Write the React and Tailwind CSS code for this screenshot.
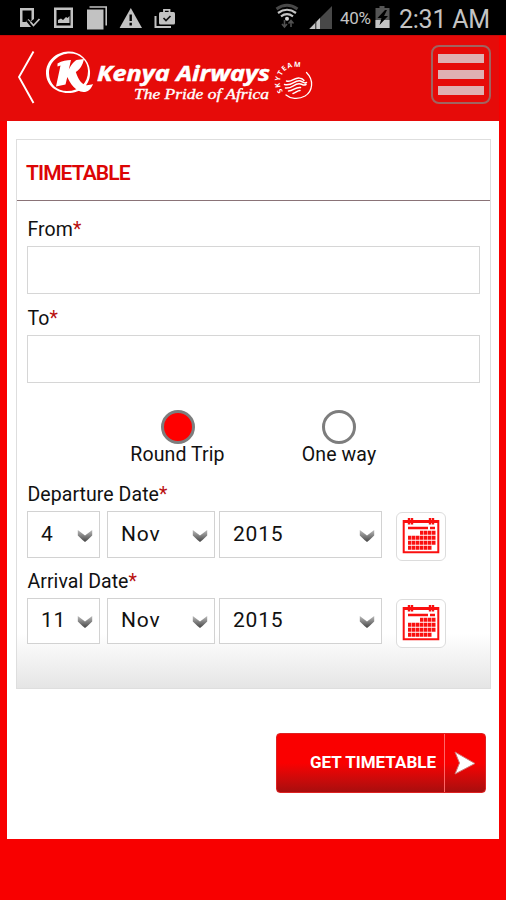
import { useState } from "react";

function StatusBar() {
  return (
    <div className="flex h-[35px] items-center bg-black">
      <svg width="180" height="35" fill="#c2c2c2">
        <path fillRule="evenodd" d="M20 8h14v11l-4 3-2-2-2 1 5 6H20zM22.500 10.500v11.500h3l3-3 2 2 1-1v-9.500z" />
        <path d="M30.500 22l3 3.500 6-6.500" fill="none" stroke="#c2c2c2" strokeWidth="1.800" />
        <path fillRule="evenodd" d="M54 7.500h19v20.500h-19zM56.500 10v15.500h14v-15.500z" />
        <path d="M58 23v-3l3-1.500 2 1.500 3-3 1.500 1 2-2v7z" />
        <path d="M87 9.500h16.500v20h-16.500z" />
        <path d="M89.500 7h16.700v18.500" fill="none" stroke="#c2c2c2" strokeWidth="1.600" />
        <path d="M130.800 8l11.200 20h-22.400z" />
        <path d="M130.700 14.500v6.500M130.700 22.800v2.800" stroke="#000" strokeWidth="2.400" />
        <rect x="159" y="12" width="16" height="12.500" rx="1.500" />
        <path d="M164 12v-2.200h5.500v2.200" fill="none" stroke="#c2c2c2" strokeWidth="1.800" />
        <path d="M155.500 16v11h15.500" fill="none" stroke="#c2c2c2" strokeWidth="2" />
        <path d="M163.500 18l2.500 2.500 4.500-4.500" fill="none" stroke="#111" strokeWidth="1.700" />
      </svg>
      <svg className="ml-[94px]" width="61" height="35" fill="none">
        <path d="M2.500 9Q13 1.500 23.500 9" stroke="#484848" strokeWidth="3" />
        <path d="M4 13Q13 6.500 22 13" stroke="#c4c4c4" strokeWidth="2.200" />
        <path d="M7 16.300Q13 12 19 16.300" stroke="#c4c4c4" strokeWidth="2.200" />
        <circle cx="13" cy="18.800" r="2" fill="#d4d4d4" />
        <path d="M10.500 20v6M8 24l2.500 3 2.500-3M17 27v-6M14.500 23.500l2.500-3 2.500 3" stroke="#505050" strokeWidth="1.600" />
        <path d="M58 6v23h-23z" fill="#484848" />
        <path d="M46 18v11h-10.500z" fill="#c4c4c4" />
        <path d="M41.800 21v8" stroke="#222" strokeWidth="1" />
      </svg>
      <span className="ml-[5px] w-[35px] pt-[2px] font-[Roboto,sans-serif] text-[17px] leading-none tracking-[-0.300px] text-[#c4c4c4]">40%</span>
      <svg width="16" height="35">
        <path d="M4.500 6h5v2h5v20h-14V8h4z" fill="#555" />
        <path d="M.5 20h14v8h-14z" fill="#c4c4c4" />
        <path d="M10 10l-7.500 8h4l-2 7 8.500-9H9l3-6z" fill="#000" />
      </svg>
      <span className="ml-[8px] whitespace-nowrap pt-[3px] font-[Roboto,sans-serif] text-[25px] leading-none tracking-[-0.250px] text-[#c4c4c4]">2:31 AM</span>
    </div>
  );
}

function Logo() {
  return (
    <svg width="280" height="60" viewBox="40 47 280 60" fill="#fff">
      <path fillRule="evenodd" d="M68 51.500C79 51 89 59 90 71C91 85 81 93 68 93C55 93 46 84 46 73C46 61 56 52 68 51.500ZM70 53.500C59 53.500 49 62 49 73C49 84 57 91 67 91C80 91 88 83 88 71C88 61 80 53.500 70 53.500Z" />
      <path d="M57.500 63.500C62 60.500 67 60 71 60L68.800 69.500C70.500 66 73.500 61.500 76.500 60L84 59C82.500 65.500 80 69.500 75.800 72C78 79 82 85 86.500 85.200C89 85.300 91 84.500 93 84C91 89.500 88 92 83.500 92C75 91.500 70 83 67.300 77L65.500 84.500L56 86.500L60.500 65.500L57.500 66.500Z" />
      <text x="97" y="80.500" textLength="173" lengthAdjust="spacingAndGlyphs" className="font-['Open_Sans',sans-serif] text-[22px] font-bold italic" stroke="#fff" strokeWidth=".5">Kenya Airways</text>
      <text x="134" y="98.500" textLength="135" lengthAdjust="spacingAndGlyphs" className="font-['Liberation_Serif',serif] text-[14px] italic" stroke="#fff" strokeWidth=".35">The Pride of Africa</text>
      <path id="skyteam" d="M283 91.500A14 14 0 0 1 308 73" fill="none" />
      <text className="font-['Open_Sans',sans-serif] text-[7px] font-bold">
        <textPath href="#skyteam" textLength="39">SKYTEAM</textPath>
      </text>
      <g fill="none" stroke="#fff" strokeLinecap="round">
        <path d="M306.500 72.500C314 80 313 91 305 96C298 100 290 98.500 286 95" strokeWidth="1.300" />
        <path d="M286.500 81c5 2 8-4 13-3q3 .5 4.500 2.500M284.500 84.500c8 2 10-5 16-3.500 3 .8 3 3 6 1.500M285.500 88c7 1 9-5.500 15-4 3 .7 3 2 5.500.5M288.500 91c5 0 7-4.500 12-3.500M293 93.500c3-.5 4-3 7-3" strokeWidth="1.500" />
      </g>
    </svg>
  );
}

function Header() {
  return (
    <header className="flex h-[86px] border-t border-[#cc0808] bg-[#e60b09]">
      <svg className="ml-4 mt-[13px] shrink-0" width="24" height="58" fill="none" stroke="#fff" strokeWidth="1.900">
        <path d="M17.500 2.500L3 28l14.500 26" />
      </svg>
      <div className="mt-[11px] w-[280px] shrink-0"><Logo /></div>
      <button className="ml-[111px] mt-[9px] flex h-[59px] w-[60px] shrink-0 flex-col items-center gap-[7px] rounded-lg border-2 border-[#a06460] pt-[7px]">
        <span className="h-[9px] w-[46px] bg-[#dfb0b2]" />
        <span className="h-[9px] w-[46px] bg-[#dfb0b2]" />
        <span className="h-[9px] w-[46px] bg-[#dfb0b2]" />
      </button>
      <div className="ml-auto w-[7px] bg-[#f80000]" />
    </header>
  );
}

function Label({ children }) {
  return (
    <label className="block pl-[0.500px] text-[19.500px] leading-[24px] tracking-[0.060px] text-[#111]">
      {children}<span className="text-[#b90f0f]">*</span>
    </label>
  );
}

function Select({ value, className }) {
  return (
    <div className={`flex items-center justify-between border border-[#d2d2d2] bg-white pl-[13px] pr-[6px] text-[21px] tracking-[0.800px] text-[#111] ${className}`}>
      <span>{value}</span>
      <svg width="16" height="16" viewBox="0 0 16 16">
        <defs>
          <linearGradient id="chevron" x1="0" y1="0" x2="0" y2="1">
            <stop offset="0" stopColor="#bbb" />
            <stop offset="1" stopColor="#444" />
          </linearGradient>
        </defs>
        <path d="M.8 3l7.200 5.500 7.200-5.500v5.500l-4.700 4.500-2.500 2-2.500-2L.8 8.500z" fill="url(#chevron)" />
      </svg>
    </div>
  );
}

function CalendarIcon() {
  return (
    <svg width="38" height="38" viewBox="0 0 38 38" fill="none" stroke="#fa1010">
      <path d="M1.700 35.300V4h34.600v31.300z" strokeWidth="2" />
      <path d="M1 4.500h36" strokeWidth="3" />
      <path d="M7 1v6.500M10 1v6.500M28 1v6.500M31 1v6.500" strokeWidth="2.400" />
      <path d="M6 11h20M28 11h5" strokeWidth="2.600" />
      <path d="M18 15.700h16M6 20.700h28M6 25.700h28M6 30.700h24" strokeWidth="4" strokeDasharray="3.500 .5" />
    </svg>
  );
}

function DateRow({ day, month, year, className }) {
  return (
    <div className="flex">
      <Select value={day} className={`w-[73px] ${className}`} />
      <Select value={month} className={`ml-[7px] w-[108px] ${className}`} />
      <Select value={year} className={`ml-[4px] w-[163px] ${className}`} />
      <button className="ml-[14px] mt-[1px] flex h-[49px] w-[50px] justify-center rounded-md border border-[#dcdcdc] bg-white pt-[4px]">
        <CalendarIcon />
      </button>
    </div>
  );
}

function TripOption({ label, active, onClick, className }) {
  return (
    <button onClick={onClick} className={`flex flex-col items-center text-[19.500px] leading-[22px] tracking-[0.100px] text-[#111] ${className}`}>
      <span className={`h-[34px] w-[34px] rounded-full border-[3px] border-[#7d7d7d] ${active ? "bg-[#ff0000]" : "bg-white"}`} />
      {label}
    </button>
  );
}

export default function App() {
  const [trip, setTrip] = useState("round");

  return (
    <div className="h-[900px] w-[506px] overflow-hidden bg-[#f80000] font-[Roboto,sans-serif]">
      <StatusBar />
      <Header />
      <main className="mx-[7px] h-[718px] w-[492px] bg-white pl-[9px] pt-[18px]">
        <section className="h-[550px] w-[475px] border border-[#dedede] bg-linear-to-b from-white from-90% to-[#e5e5e5]">
          <h1 className="h-[61px] border-b border-[#8a7377] pl-[9px] text-[21px] font-semibold leading-[66px] tracking-[-0.900px] text-[#dc0505]">TIMETABLE</h1>
          <div className="pl-[10px] pt-[17px]">
            <Label>From</Label>
            <input className="mt-[4px] block h-[48px] w-[453px] border border-[#d6d6d6] bg-white" />
            <div className="mt-[13px]"><Label>To</Label></div>
            <input className="mt-[4px] block h-[48px] w-[453px] border border-[#d6d6d6] bg-white" />
            <div className="mt-[27px] flex">
              <TripOption label="Round Trip" active={trip === "round"} onClick={() => setTrip("round")} className="ml-[90px] w-[121px]" />
              <TripOption label="One way" active={trip === "one"} onClick={() => setTrip("one")} className="ml-[41px] w-[120px]" />
            </div>
            <div className="mb-[4px] mt-[17px]"><Label>Departure Date</Label></div>
            <DateRow day="4" month="Nov" year="2015" className="h-[47px]" />
            <div className="mb-[4px] mt-[9px]"><Label>Arrival Date</Label></div>
            <DateRow day="11" month="Nov" year="2015" className="h-[46px]" />
          </div>
        </section>
        <button className="ml-[260px] mt-[44px] flex h-[60px] w-[210px] overflow-hidden rounded-[4px] border border-[#d22] bg-linear-to-b from-[#fa0000] from-50% to-[#a80d0d] text-[17px] font-bold text-white">
          <span className="flex h-full w-[167px] items-center justify-end whitespace-nowrap pr-[8px]">GET TIMETABLE</span>
          <span className="flex h-full flex-1 items-center justify-center border-l border-[#f66]">
            <svg width="24" height="26" viewBox="0 0 24 26" fill="#fff" stroke="#c77" strokeWidth="1">
              <path d="M2 2l20 11.500L2 24l4.500-11z" />
            </svg>
          </span>
        </button>
      </main>
    </div>
  );
}
